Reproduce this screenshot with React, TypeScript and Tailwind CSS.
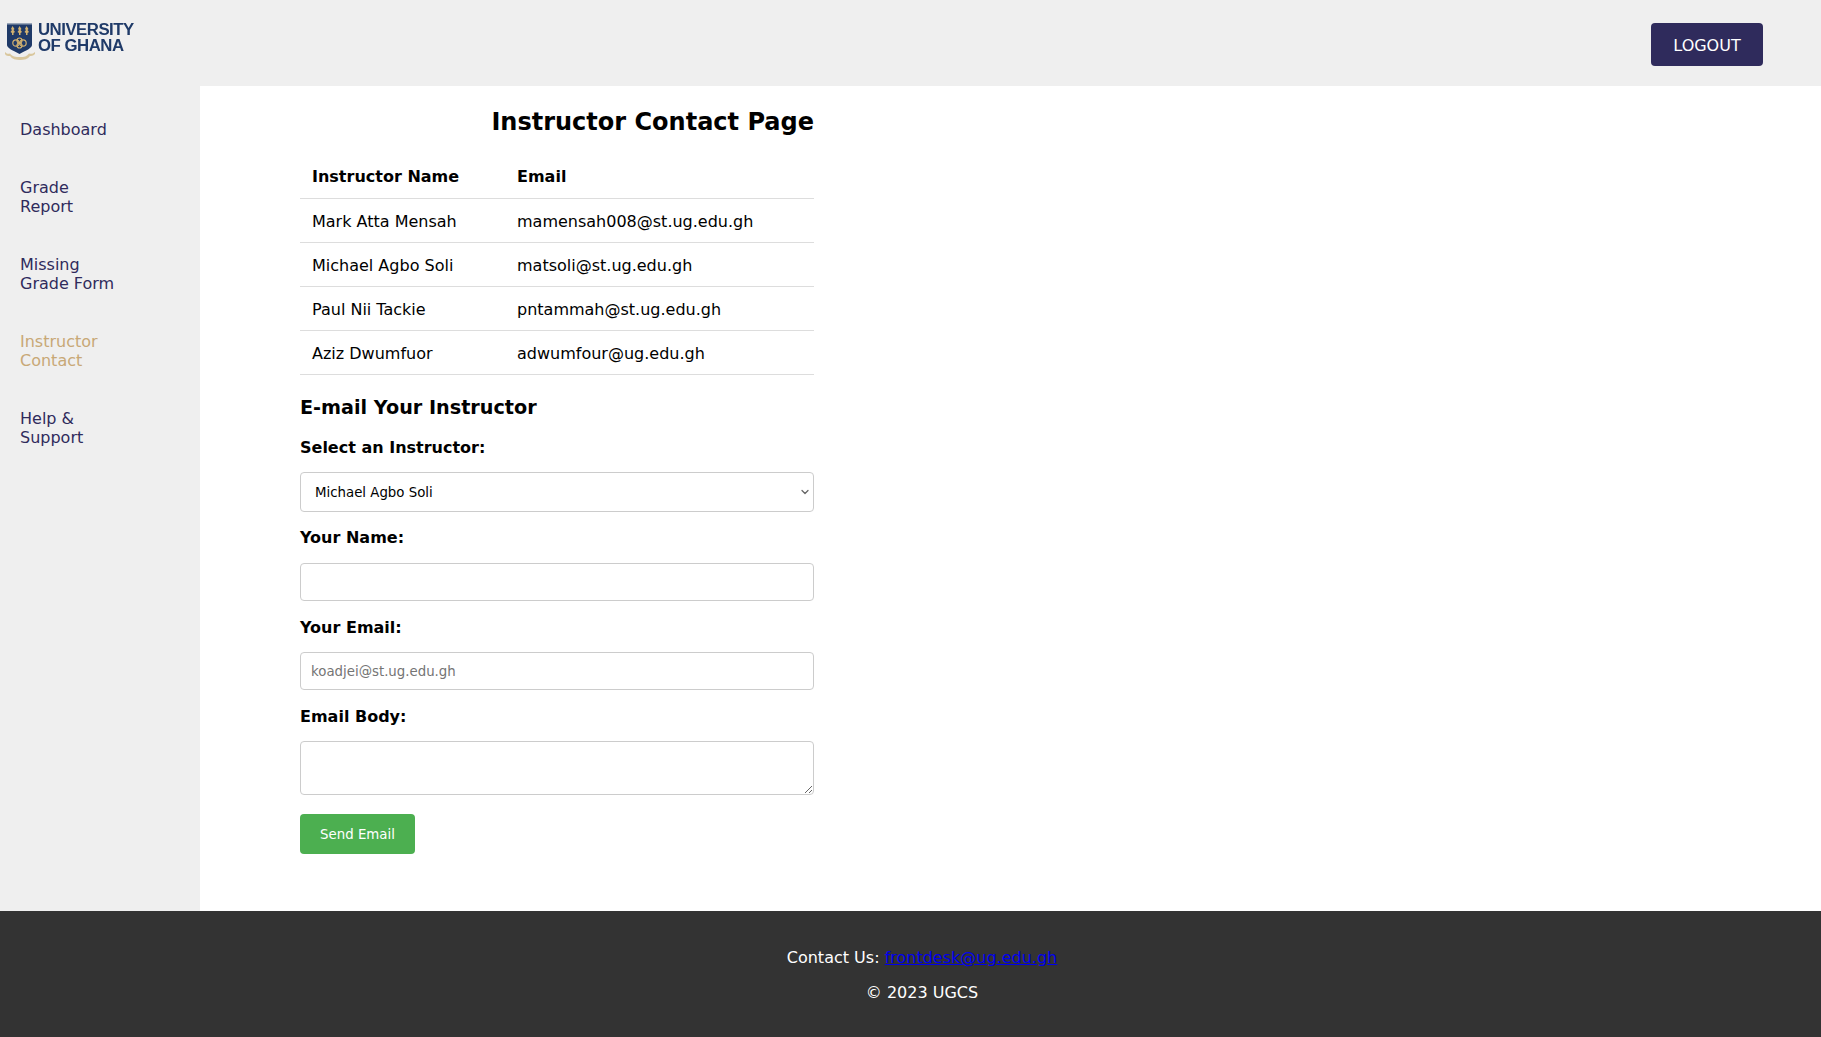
import React from 'react';
import { ChevronDown } from 'lucide-react';

const NAV_ITEMS = [
  { label: 'Dashboard' },
  { label: 'Grade\nReport' },
  { label: 'Missing\nGrade Form' },
  { label: 'Instructor\nContact', active: true },
  { label: 'Help &\nSupport' },
];

const INSTRUCTORS = [
  { name: 'Mark Atta Mensah', email: 'mamensah008@st.ug.edu.gh' },
  { name: 'Michael Agbo Soli', email: 'matsoli@st.ug.edu.gh' },
  { name: 'Paul Nii Tackie', email: 'pntammah@st.ug.edu.gh' },
  { name: 'Aziz Dwumfuor', email: 'adwumfour@ug.edu.gh' },
];

const Crest: React.FC = () => (
  <svg width="32" height="38" viewBox="0 0 32 38" className="shrink-0 blur-[0.4px]">
    <path d="M2 1h25v22c0 3-5 5-12.500 9C7 28 2 26 2 23z" fill="#1f3a68" />
    <rect x="2" y="1" width="25" height="1.500" fill="#9aa6b8" />
    <g fill="#d3b26f">
      <path d="M7.500 4l2 3-1 1 1.500 2-1.500 1v2H7v-2L5.500 10 7 8 6 7z" />
      <path d="M14.500 4l2 3-1 1 1.500 2-1.500 1v2H14v-2l-1.500-1L14 8l-1-1z" />
      <path d="M21.500 4l2 3-1 1 1.500 2-1.500 1v2H21v-2l-1.500-1L21 8l-1-1z" />
    </g>
    <g fill="none" stroke="#d3b26f" strokeWidth="1.200">
      <circle cx="11" cy="21" r="3.200" />
      <circle cx="18" cy="21" r="3.200" />
      <circle cx="14.500" cy="18.500" r="2.500" />
      <circle cx="14.500" cy="23.500" r="2.500" />
    </g>
    <path d="M0 30c2 2 3 2 5 1.500 2 3 6 3.500 10 3.500s7-.5 9-3.500c2 .5 4 .5 6-1.500v2c-2 2-4 2-5 2-2 3-6 4-10 4s-8-1-10-4c-2 0-4 0-5-2z" fill="#d9c79d" />
  </svg>
);

const fieldClass = 'block w-full border border-[#cccccc] rounded-[4px] bg-white text-[13.33px] text-black';
const labelClass = 'block font-bold leading-[19px]';

export default function App() {
  return (
    <div className="min-h-[1037px] flex flex-col bg-white text-black text-[16px] font-['Verdana','DejaVu_Sans',sans-serif]">
      <header className="h-[86px] bg-[#efefef] flex items-start justify-between">
        <div className="flex items-start pl-[5px] pt-[22px]">
          <Crest />
          <div className="ml-[1px] font-['Liberation_Sans',sans-serif] font-bold text-[16.8px] leading-[16px] tracking-[-0.5px] text-[#1f3a68] blur-[0.3px]">
            UNIVERSITY
            <br />
            OF GHANA
          </div>
        </div>
        <button className="mt-[23px] mr-[58px] w-[112px] h-[43px] pt-[2px] rounded-[4px] bg-[#2f2b5c] text-white text-[16px]">
          LOGOUT
        </button>
      </header>

      <div className="flex flex-1">
        <nav className="w-[200px] shrink-0 bg-[#efefef] pt-[34px] pl-[20px] flex flex-col gap-[39px]">
          {NAV_ITEMS.map((item) => (
            <a
              key={item.label}
              href="#"
              className={`block whitespace-pre-line leading-[19px] ${item.active ? 'text-[#c8a876]' : 'text-[#2f2b5c]'}`}
            >
              {item.label}
            </a>
          ))}
        </nav>

        <main className="flex-1 pl-[100px] pt-[22px]">
          <div className="w-[514px]">
            <h1 className="text-right text-[24px] leading-[28px] font-bold mb-[18px]">Instructor Contact Page</h1>

            <table className="w-full border-collapse table-fixed">
              <thead>
                <tr className="h-[44px] border-b border-[#dddddd]">
                  <th className="w-[205px] px-[12px] pt-[2px] text-left font-bold">Instructor Name</th>
                  <th className="px-[12px] pt-[2px] text-left font-bold">Email</th>
                </tr>
              </thead>
              <tbody>
                {INSTRUCTORS.map((row) => (
                  <tr key={row.email} className="h-[44px] border-b border-[#dddddd]">
                    <td className="px-[12px] pt-[3px]">{row.name}</td>
                    <td className="px-[12px] pt-[3px]">{row.email}</td>
                  </tr>
                ))}
              </tbody>
            </table>

            <h2 className="mt-[22px] text-[19.2px] leading-[22px] font-bold">E-mail Your Instructor</h2>

            <form className="mt-[19px]" onSubmit={(e) => e.preventDefault()}>
              <label className={labelClass}>Select an Instructor:</label>
              <div className="relative mt-[15px]">
                <select defaultValue="Michael Agbo Soli" className={`${fieldClass} h-[40px] pt-[2px] px-[14px] appearance-none`}>
                  {INSTRUCTORS.map((row) => (
                    <option key={row.email}>{row.name}</option>
                  ))}
                </select>
                <ChevronDown size={12} strokeWidth={2.5} className="absolute right-[3px] top-[14px] text-[#666666]" />
              </div>

              <label className={`${labelClass} mt-[16px]`}>Your Name:</label>
              <input type="text" className={`${fieldClass} mt-[16px] h-[38px] px-[10px]`} />

              <label className={`${labelClass} mt-[17px]`}>Your Email:</label>
              <input
                type="email"
                placeholder="koadjei@st.ug.edu.gh"
                className={`${fieldClass} mt-[15px] h-[38px] pt-[1px] px-[10px] placeholder:text-[#757575]`}
              />

              <label className={`${labelClass} mt-[17px]`}>Email Body:</label>
              <textarea className={`${fieldClass} mt-[15px] h-[54px] p-[10px]`} />

              <button className="mt-[19px] w-[115px] h-[40px] pt-[2px] rounded-[4px] bg-[#4caf50] text-white text-[13.33px]">
                Send Email
              </button>
            </form>
          </div>
        </main>
      </div>

      <footer className="h-[126px] bg-[#333333] text-white text-center pt-[37px] pl-[23px]">
        <p className="leading-[19px]">
          Contact Us:{' '}
          <a href="#" className="text-[#0000ee] underline">
            frontdesk@ug.edu.gh
          </a>
        </p>
        <p className="mt-[16px] leading-[19px]">© 2023 UGCS</p>
      </footer>
    </div>
  );
}
